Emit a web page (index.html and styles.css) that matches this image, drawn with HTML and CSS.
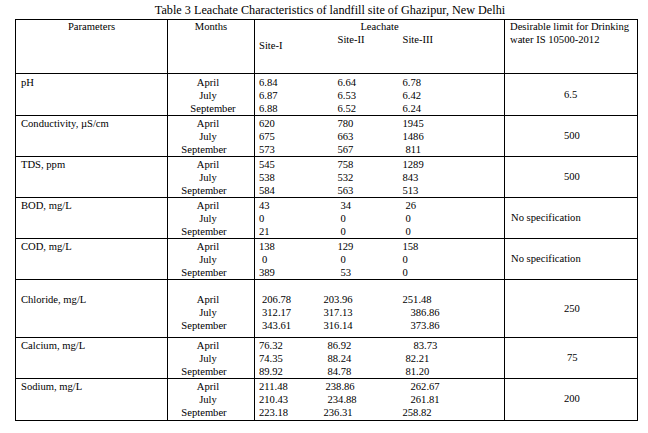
FILE: index.html
```html
<!DOCTYPE html>
<html>
<head>
<meta charset="utf-8">
<link rel="stylesheet" href="styles.css">
</head>
<body>
<div class="title">Table 3 Leachate Characteristics of landfill site of Ghazipur, New Delhi</div>
<table class="t">
  <colgroup>
    <col class="c-par"><col class="c-mon"><col class="c-s1"><col class="c-s2"><col class="c-s3"><col class="c-lim">
  </colgroup>
  <thead>
    <tr class="h-top">
      <th rowspan="2" class="h-par">Parameters</th>
      <th rowspan="2" class="h-mon">Months</th>
      <th colspan="3" class="h-lea">Leachate</th>
      <th rowspan="2" class="h-lim">Desirable limit for Drinking<br>water IS 10500-2012</th>
    </tr>
    <tr class="h-sites">
      <th class="s1"><span class="low">Site-I</span></th>
      <th class="s2">Site-II</th>
      <th class="s3">Site-III</th>
    </tr>
  </thead>
  <tbody>
    <tr class="r-first">
      <td class="par">pH</td>
      <td class="mon"><div>April</div><div>July</div><div class="sep-r">September</div></td>
      <td class="s1"><div>6.84</div><div>6.87</div><div>6.88</div></td>
      <td class="s2"><div>6.64</div><div>6.53</div><div>6.52</div></td>
      <td class="s3"><div>6.78</div><div>6.42</div><div>6.24</div></td>
      <td class="lim num">6.5</td>
    </tr>
    <tr>
      <td class="par">Conductivity, µS/cm</td>
      <td class="mon"><div>April</div><div>July</div><div class="sep-l">September</div></td>
      <td class="s1"><div>620</div><div>675</div><div>573</div></td>
      <td class="s2"><div>780</div><div>663</div><div>567</div></td>
      <td class="s3"><div>1945</div><div>1486</div><div class="i1">811</div></td>
      <td class="lim num">500</td>
    </tr>
    <tr>
      <td class="par">TDS, ppm</td>
      <td class="mon"><div>April</div><div>July</div><div class="sep-l">September</div></td>
      <td class="s1"><div>545</div><div>538</div><div>584</div></td>
      <td class="s2"><div>758</div><div>532</div><div>563</div></td>
      <td class="s3"><div>1289</div><div>843</div><div>513</div></td>
      <td class="lim num">500</td>
    </tr>
    <tr>
      <td class="par">BOD, mg/L</td>
      <td class="mon"><div>April</div><div>July</div><div class="sep-l">September</div></td>
      <td class="s1"><div>43</div><div>0</div><div>21</div></td>
      <td class="s2"><div class="i1">34</div><div class="i1">0</div><div class="i1">0</div></td>
      <td class="s3"><div class="i1">26</div><div class="i1">0</div><div class="i1">0</div></td>
      <td class="lim spec">No specification</td>
    </tr>
    <tr>
      <td class="par">COD, mg/L</td>
      <td class="mon"><div>April</div><div>July</div><div class="sep-l">September</div></td>
      <td class="s1"><div>138</div><div class="i1">0</div><div>389</div></td>
      <td class="s2"><div>129</div><div class="i1">0</div><div class="i1">53</div></td>
      <td class="s3"><div>158</div><div>0</div><div>0</div></td>
      <td class="lim spec">No specification</td>
    </tr>
    <tr class="r-blank">
      <td class="par">Chloride, mg/L</td>
      <td class="mon"><div>April</div><div>July</div><div class="sep-l">September</div></td>
      <td class="s1"><div class="i1">206.78</div><div class="i1">312.17</div><div class="i1">343.61</div></td>
      <td class="s2"><div class="o3">203.96</div><div class="o3">317.13</div><div class="o3">316.14</div></td>
      <td class="s3"><div>251.48</div><div class="i2">386.86</div><div class="i2">373.86</div></td>
      <td class="lim num">250</td>
    </tr>
    <tr>
      <td class="par">Calcium, mg/L</td>
      <td class="mon"><div>April</div><div>July</div><div class="sep-l">September</div></td>
      <td class="s1"><div>76.32</div><div>74.35</div><div>89.92</div></td>
      <td class="s2"><div class="o1">86.92</div><div class="o1">88.24</div><div class="o1">84.78</div></td>
      <td class="s3"><div class="i3">83.73</div><div class="i1">82.21</div><div class="i1">81.20</div></td>
      <td class="lim num n75">75</td>
    </tr>
    <tr class="r-last">
      <td class="par">Sodium, mg/L</td>
      <td class="mon"><div>April</div><div>July</div><div class="sep-l">September</div></td>
      <td class="s1"><div>211.48</div><div>210.43</div><div>223.18</div></td>
      <td class="s2"><div class="o2">238.86</div><div class="o1">234.88</div><div class="o3">236.31</div></td>
      <td class="s3"><div class="i2">262.67</div><div class="i2">261.81</div><div>258.82</div></td>
      <td class="lim num">200</td>
    </tr>
  </tbody>
</table>
</body>
</html>
```
FILE: styles.css
```css
html, body {
  margin: 0;
  padding: 0;
  background: #ffffff;
}

body {
  font-family: "Liberation Serif", "Times New Roman", serif;
  font-size: 10.6px;
  color: #000000;
}

.title {
  font-size: 12.2px;
  line-height: 14px;
  padding: 3px 0 2px 12px;
  text-align: center;
}

.t {
  border-collapse: collapse;
  table-layout: fixed;
  width: 622px;
  margin-left: 15px;
}

.c-par { width: 152px; }
.c-mon { width: 87px; }
.c-s1 { width: 67px; }
.c-s2 { width: 66px; }
.c-s3 { width: 117px; }
.c-lim { width: 133px; }

.t th,
.t td {
  border: 1px solid #000000;
  padding: 0;
  vertical-align: top;
  font-weight: normal;
  line-height: 13px;
  text-align: left;
  white-space: nowrap;
}

/* header */
.h-top { height: 13px; }
.h-sites { height: 40px; }

.t th.h-par,
.t th.h-mon {
  text-align: center;
}
.t th.h-lea {
  text-align: center;
  border-bottom: none;
}
.t th.h-lim {
  padding-left: 5px;
}
.h-sites th {
  border-top: none;
  padding-top: 0;
}
.low {
  display: block;
  padding-top: 6px;
}

/* site columns share the Leachate cell: no inner borders */
.t .s1 { border-right: none; padding-left: 4px; }
.t .s2 { border-left: none; border-right: none; padding-left: 16px; }
.t .s3 { border-left: none; padding-left: 15px; }

.t td {
  padding-top: 1px;
}

.t td.par {
  padding-left: 5px;
}

.t td.mon {
  text-align: center;
  padding-right: 6px;
}

.sep-r { padding-left: 10px; }
.sep-l { padding-right: 8px; }

.i1 { padding-left: 3px; }
.i2 { padding-left: 8px; }
.i3 { padding-left: 11px; }
.o1 { margin-left: -10px; }
.o2 { margin-left: -12px; }
.o3 { margin-left: -14px; }

.t td.lim {
  vertical-align: middle;
  padding-top: 0;
}
.t td.num { padding-left: 59px; }
.t td.n75 { padding-left: 62px; }
.t td.spec { padding-left: 6px; }

.r-first td { padding-top: 2px; }
.r-blank td {
  padding-top: 13px;
  padding-bottom: 5px;
}
.r-last td { padding-bottom: 1px; }
.t .r-first td.lim,
.t .r-blank td.lim {
  padding-top: 0;
  padding-bottom: 0;
}
```
